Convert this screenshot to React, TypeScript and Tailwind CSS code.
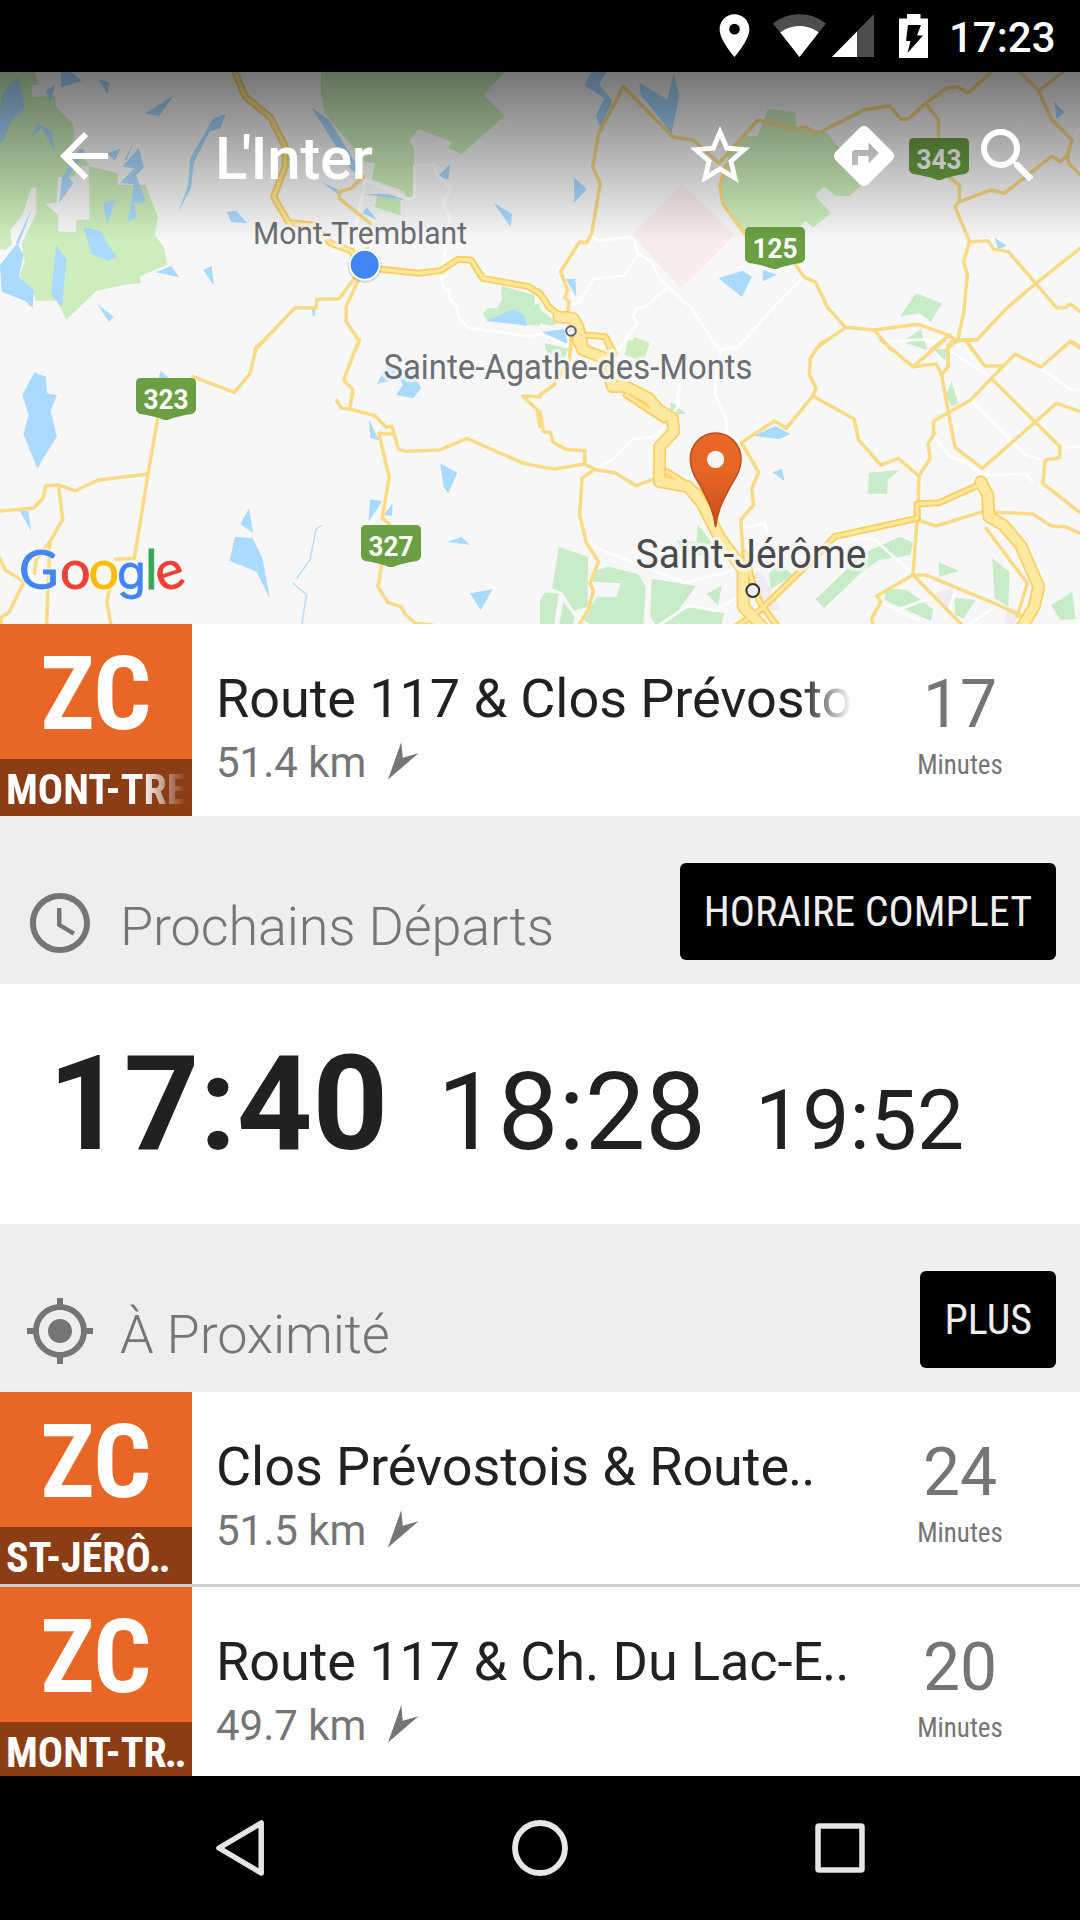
import React from "react";
import {
  MdAccessTime,
  MdArrowBack,
  MdDirections,
  MdLocationOn,
  MdMyLocation,
  MdSearch,
  MdStarBorder,
} from "react-icons/md";

type Sector = {
  transform: string;
  parks: string[];
  woods: string[];
  built: string[];
  holes: string[];
  water: string[];
  streams: string[];
  lanes: string[];
  roads: string[];
  highways: string[];
  motorways: string[];
};

/* The map is split in four sectors, each with its own local grid. */
const SECTORS: Sector[] = [
  {
    transform: "translate(0 -12) scale(.3444 .3333)",
    parks: [
      "0,36 100,36 113,76 90,76 94,110 160,108 163,140 213,193 213,290 240,290 258,318 342,340 342,374 422,374 458,470 450,525 475,560 486,614 408,648 408,670 362,674 280,693 192,780 165,722 105,722 95,690 57,650 72,605 62,552 105,460 105,380 90,385 65,465 30,510 35,555 15,570 0,568",
      "932,36 1465,36 1405,104 1465,168 1340,283 1303,265 1312,245 1215,207 1188,243 1203,268 1203,415 1175,412 1175,395 1080,358 1088,310 1060,305 943,160 932,100",
      "1097,400 1163,422 1163,467 1088,440",
    ],
    woods: ["1455,678 1552,705 1552,735 1568,730 1568,797 1415,783 1402,762 1415,745 1443,745 1457,718"],
    built: [],
    holes: ["168,352 213,350 240,318 258,318 260,478 222,480 220,517 168,514 170,466 132,432 165,428"],
    water: [
      "0,150 8,100 52,48 72,145 35,180 10,240 0,250",
      "177,36 205,36 237,62 178,82",
      "285,58 318,68 312,102",
      "160,72 134,92 147,127",
      "504,107 420,160 462,168",
      "655,163 618,175 600,210 552,295 546,375 518,455 555,383 562,310 608,215 640,205",
      "108,190 93,230 122,203 158,275 150,213",
      "904,142 955,180 1060,355 1020,330",
      "403,265 355,320 390,325 348,370 388,372 382,430 370,488 398,470 388,430 423,425 395,345 418,322",
      "390,240 362,300 368,300",
      "310,280 350,267 333,302",
      "230,268 247,270 200,350 213,370 172,428 180,355",
      "300,430 335,420 310,495",
      "243,502 290,512 338,590 316,604 265,582",
      "163,556 193,600 180,740 148,705",
      "50,550 68,585 55,650 98,690 95,745 72,722 5,695 0,615",
      "95,440 45,550 55,552",
      "452,637 497,618 520,652",
      "590,630 615,618 621,676",
      "282,732 330,770 317,786",
      "658,455 687,453 718,490 672,487",
      "935,367 980,388 990,410",
      "1065,442 1095,480 1052,460",
      "1055,402 1130,403 1175,420",
      "1307,312 1270,350 1302,358",
      "1433,428 1487,462 1482,500",
      "1493,747 1520,765 1532,797 1412,783",
      "906,747 915,747 914,770 908,768",
    ],
    streams: [],
    lanes: [
      "1060,360 1043,450 1020,570",
      "1060,360 1190,418 1203,410 1203,318 1260,312 1270,345 1310,385 1285,430 1305,470 1295,560 1280,640 1287,685 1305,690 1305,715 1330,745 1330,770 1358,803 1540,830 1568,822",
    ],
    roads: [
      "1055,350 1020,385 985,395 985,415 1075,490 1065,570",
      "1040,640 985,716 920,718 918,743 857,743 740,870",
      "1045,650 1005,740 1005,785 1043,843 1032,870",
    ],
    highways: [
      "680,30 712,110 785,172 828,260 828,320 795,410 838,488 912,495 960,550 1020,572 1055,622 1215,640 1280,632 1330,598 1368,600 1402,655 1535,680 1568,702",
    ],
    motorways: [],
  },
  {
    transform: "translate(540 -12) scale(.3444 .3333)",
    parks: [
      "662,147 740,157 745,200 832,215 870,265 935,375 898,408 860,408 825,380 798,405 845,460 793,503 770,483 700,560 590,520 530,425 525,375 550,280 600,228 632,228",
      "275,830 318,850 300,870 250,870",
    ],
    woods: [
      "1092,700 1167,730 1135,785 1102,760 1045,770",
      "1105,808 1125,870 1060,840",
      "0,747 50,790 35,797 0,790",
      "15,850 100,870 15,870",
    ],
    built: [],
    holes: [],
    water: [
      "150,36 192,36 172,75 210,122 175,205 163,165 187,115 128,75",
      "288,68 370,118 388,40 405,105 382,220 292,103",
      "98,352 136,387 100,428",
      "518,655 588,632 615,650 587,711",
      "647,629 688,644 647,664",
      "75,657 103,657 105,710",
      "7,815 70,808 80,850 30,840",
      "1320,533 1356,557 1330,567",
      "1493,125 1523,157 1500,178",
    ],
    streams: [],
    lanes: [
      "150,525 170,543 268,530 285,580 325,605 345,655 440,745 520,870",
      "285,580 245,647 155,657 112,730 85,730",
      "368,682 308,740 280,745 270,770 282,790 230,870",
      "767,650 680,740 572,865 520,865",
      "995,845 1115,838 1200,870",
      "1568,205 1545,235",
      "0,820 110,870",
    ],
    roads: [
      "80,760 85,725 72,712 80,690 60,635 115,545 135,548 150,520 175,370 153,320 170,222 242,80 385,230 445,240 520,310 632,180 735,207 772,202 802,222 940,150 1015,138 1047,177 1070,177 1120,130 1180,85 1212,80 1242,100 1310,36",
      "1120,130 1157,180 1157,240",
      "540,315 523,375 530,430 600,530",
      "740,610 765,650 800,667 835,742 887,802 970,810 1098,793 1185,825 1210,842 1270,838 1355,745 1440,670 1568,565",
      "887,802 815,855 800,870",
      "970,810 1020,870",
      "1185,350 1218,375 1218,425 1205,440 1247,545 1300,542 1318,568 1360,575 1500,743 1525,743 1540,732 1568,755",
      "1218,425 1310,390 1348,400 1487,288 1510,305 1532,285 1545,240 1485,178 1448,93 1395,36",
      "1448,93 1518,36",
      "1532,285 1535,310 1568,345",
      "1247,545 1230,605 1241,645 1230,760 1212,842",
      "1190,825 1135,870",
      "1240,842 1255,870",
      "1210,842 1180,870",
      "1510,870 1540,845 1568,865",
      "90,830 90,870",
    ],
    highways: ["0,700 25,740 60,770", "130,825 190,830 205,870"],
    motorways: ["55,771 95,774 110,800 125,870"],
  },
  {
    transform: "translate(0 268) scale(.3444 .3333)",
    parks: [],
    woods: [],
    built: [],
    holes: [],
    water: [
      "100,97 133,110 137,160 165,166 147,212 165,290 108,385 68,283 83,225 65,165",
      "467,92 490,114 460,114",
      "1120,80 1095,132 1160,115 1170,135 1150,165 1200,175 1222,145 1200,90",
      "1072,240 1100,300 1075,295",
      "1278,370 1328,398 1302,460 1288,440",
      "723,505 735,579 698,553",
      "682,590 733,594 762,655 784,777 745,695 667,662",
      "1074,478 1110,484 1070,545",
      "1140,488 1138,528 1115,525",
      "1298,606 1340,590 1364,614",
      "1365,760 1430,748 1396,811",
      "58,513 82,512 91,575",
    ],
    streams: ["932,558 918,567 900,660 862,715", "852,730 890,765 876,852"],
    lanes: [],
    roads: [
      "774,-4 745,20 725,103 680,157 560,110",
      "458,235 430,400 390,655 335,658",
      "430,402 285,420 218,453 170,435 133,437 125,475 97,505 0,513",
      "170,435 182,538 145,605 135,860",
      "0,655 15,690 70,725 25,818 5,830 0,860",
      "145,605 105,660 100,700",
      "320,740 310,785 323,860",
      "1043,-2 998,120 1025,150 1015,207 992,205 978,182",
      "1015,207 1088,227 1122,262 1138,258 1157,328 1180,334 1277,330 1355,295 1520,370 1568,380",
      "1145,282 1100,280 1130,412 1110,535 1130,552",
      "1108,675 1098,740 1125,787 1165,800 1178,825 1205,850 1255,855",
      "1568,170 1518,168 1560,210 1568,260",
    ],
    highways: [],
    motorways: [],
  },
  {
    transform: "translate(540 268) scale(.3444 .3333)",
    parks: ["255,0 318,12 305,50 285,60 247,45"],
    woods: [
      "55,620 140,652 138,800 98,812 65,757 35,745",
      "0,780 15,757 55,762 40,860 0,860",
      "68,785 100,830 95,860 55,860",
      "162,690 200,680 285,703 307,740 300,860 120,860 145,805 165,770 222,770 235,730 155,725",
      "325,716 453,738 395,820 440,800 535,820 525,860 340,860 320,830",
      "528,738 517,795 483,762",
      "458,553 500,610 480,645 430,650 395,600 455,605",
      "690,665 735,705 670,748 665,700",
      "800,778 940,640 1045,590 1083,608 1075,645 985,660 940,690 825,805",
      "955,398 1045,390 1010,420 1008,461 952,461",
      "1195,125 1215,190 1195,200 1178,165",
      "1157,667 1217,693 1160,710",
      "1313,655 1363,695 1360,800 1320,775",
      "1485,795 1545,755 1555,837 1510,840",
      "1005,745 1065,750 1142,808 1135,843 1000,780",
      "1205,773 1265,780 1230,835 1205,825",
      "380,185 425,222 378,222",
      "1060,8 1110,0 1125,30",
      "1140,25 1185,30 1175,60",
      "20,25 80,30 70,60 20,50",
    ],
    built: [
      "620,700 640,690 700,810 640,810",
      "1145,760 1200,745 1205,790 1175,810",
      "1355,800 1385,810 1380,860 1350,860",
    ],
    holes: [],
    water: ["683,258 727,282 695,298 620,287", "675,397 702,387 711,424"],
    streams: [],
    lanes: [
      "500,0 525,30 510,100 508,165 540,235 542,275 585,308",
      "525,30 570,22 590,0",
      "410,120 398,180 405,195 385,220 360,262 330,290 270,297 215,355 160,388",
      "135,612 420,728 560,692",
      "585,565 652,550 662,580",
      "860,597 970,597 1080,700",
      "115,838 150,860",
      "340,860 430,797 510,812 575,770",
      "1140,0 1310,112",
      "1250,180 1410,345 1465,360",
      "1145,290 1190,350 1235,365 1285,405 1412,403 1430,425",
      "1455,85 1540,148 1568,150",
      "1510,323 1568,320",
      "990,788 1100,840",
      "1050,805 1145,770",
      "1210,738 1187,815",
      "1330,795 1235,860",
      "1410,860 1450,810",
    ],
    roads: [
      "840,-5 815,10 785,55 782,105 802,145 792,168 715,265 680,243 585,308 635,397 615,445 620,495 583,540 590,650",
      "792,168 912,237 925,300 990,375 1040,355 1100,408 1098,490",
      "1100,408 1133,355 1127,310 1143,285 1143,243 1250,180 1310,115 1380,42 1455,82 1540,3 1568,20",
      "990,0 1083,80 1150,72 1165,100 1205,322 1285,385 1500,190 1568,215",
      "1205,0 1185,15 1185,80 1165,105",
      "1083,80 1175,0",
      "1235,0 1292,78 1340,78",
      "1205,0 1270,0",
      "1310,115 1510,320 1508,353 1467,360 1460,430 1568,518",
      "1098,540 1150,558 1285,515 1430,522 1485,558 1525,560 1568,580",
      "1095,540 1083,705 978,768 990,785 963,835 968,860",
      "1083,705 1120,705 1330,795 1395,825",
      "1083,705 1230,860",
      "1295,565 1415,730 1385,830",
      "0,215 10,275 30,278 38,307 75,328 130,332 130,372 42,387 0,380",
      "130,372 158,388 220,400 280,437 335,415",
      "158,388 122,415 115,525 135,610 170,665 145,730 155,752 140,810 110,860",
      "90,0 85,60 40,135 0,165",
    ],
    highways: [
      "1280,432 1160,488 1095,492 1095,535 855,590 830,620 640,810 570,860",
      "370,395 460,455 500,530",
      "250,165 360,240",
      "595,640 620,740 640,790 690,860",
      "195,0 215,40",
    ],
    motorways: [
      "110,0 125,30 190,55 210,140 250,140 315,175 345,210 385,235 388,275 347,320 347,425 430,440 470,490 520,590 590,690 590,800 645,860",
      "1280,425 1300,465 1303,530 1345,555 1395,615 1448,740 1435,800 1400,860",
    ],
  },
];

function Lines({ of, color, width }: { of: keyof Omit<Sector, "transform">; color: string; width: number }) {
  return (
    <>
      {SECTORS.map((s, i) => (
        <g key={i} transform={s.transform} fill="none" stroke={color} strokeWidth={width} strokeLinejoin="round" strokeLinecap="round">
          {s[of].map((p, j) => (
            <polyline key={j} points={p} />
          ))}
        </g>
      ))}
    </>
  );
}

function Areas({ of, color }: { of: keyof Omit<Sector, "transform">; color: string }) {
  return (
    <>
      {SECTORS.map((s, i) => (
        <g key={i} transform={s.transform} fill={color}>
          {s[of].map((p, j) => (
            <polygon key={j} points={p} />
          ))}
        </g>
      ))}
    </>
  );
}

function Shield({ x, y, label }: { x: number; y: number; label: string }) {
  return (
    <g transform={`translate(${x} ${y})`}>
      <path d="M5 0H55Q60 0 60 5V31Q60 34 56 36Q42 38 33 41.5Q30 42.5 27 41.5Q18 38 4 36Q0 34 0 31V5Q0 0 5 0Z" fill="#6a9f43" />
      <text x="30" y="30.500" textAnchor="middle" fontSize="27" fontWeight="700" fill="#fff" textLength="45" lengthAdjust="spacingAndGlyphs">
        {label}
      </text>
    </g>
  );
}

function Label({ x, y, w, size, color, children }: { x: number; y: number; w: number; size: number; color: string; children: string }) {
  return (
    <text
      x={x}
      y={y}
      fontSize={size}
      fill={color}
      textLength={w}
      lengthAdjust="spacingAndGlyphs"
      stroke="#f7f7f7"
      strokeOpacity=".75"
      strokeWidth="7"
      strokeLinejoin="round"
      paintOrder="stroke"
    >
      {children}
    </text>
  );
}

function GoogleLogo() {
  return (
    <g
      fontSize="54"
      className="font-[Lato] drop-shadow-[0_0_2px_#fff]"
      strokeWidth=".8"
    >
      <text x="19" y="517" fill="#4285f4" stroke="#4285f4">G</text>
      <text x="60" y="517" fill="#ea4335" stroke="#ea4335">o</text>
      <text x="88.500" y="517" fill="#fbbc05" stroke="#fbbc05">o</text>
      <text x="117" y="517" fontSize="47" className="font-[Inter]" fill="#4285f4" stroke="#4285f4">g</text>
      <text x="145" y="517" fill="#34a853" stroke="#34a853">l</text>
      <text x="156" y="517" fill="#ea4335" stroke="#ea4335" transform="rotate(-18 170 504)">e</text>
    </g>
  );
}

function MapCanvas() {
  return (
    <svg className="block h-[552px] w-[1080px]" viewBox="0 0 1080 552">
      <rect width="1080" height="552" fill="#f7f7f7" />
      <Areas of="parks" color="#cdeebc" />
      <Areas of="woods" color="#c8ebc8" />
      <Areas of="built" color="#efebf0" />
      <Areas of="holes" color="#f7f7f7" />
      <polygon points="681.9,111.3 734.6,163 681.2,216.3 632.3,163" fill="#f7ecec" />
      <Areas of="water" color="#aadaff" />
      <Lines of="streams" color="#b4dcfb" width={4} />
      <Lines of="lanes" color="#ffffff" width={8} />
      <Lines of="roads" color="#f9db86" width={10.5} />
      <Lines of="highways" color="#f8cf62" width={21} />
      <Lines of="motorways" color="#f8cf62" width={38} />
      <Lines of="highways" color="#fde79b" width={10} />
      <Lines of="motorways" color="#ffe89f" width={28} />

      <Shield x={136} y={306} label="323" />
      <Shield x={361} y={453} label="327" />
      <Shield x={745} y={155} label="125" />
      <Shield x={909} y={66} label="343" />

      <circle cx="571" cy="259" r="4.8" fill="#eee" stroke="#5f6368" strokeWidth="2" />
      <circle cx="752.8" cy="518.5" r="6.4" fill="#eee" stroke="#333" strokeWidth="2" />
      <Label x={253} y={171.5} w={214} size={32} color="#6b6e73">Mont-Tremblant</Label>
      <Label x={383.5} y={307} w={369} size={34.5} color="#6b6e73">Sainte-Agathe-des-Monts</Label>
      <Label x={635.5} y={495.5} w={231} size={40} color="#484a4d">Saint-Jérôme</Label>

      <circle cx="364.7" cy="194" r="17" fill="#000" opacity=".12" />
      <circle cx="364.7" cy="192.8" r="15.8" fill="#fff" />
      <circle cx="364.7" cy="192.8" r="14" fill="#4285f4" />

      <defs>
        <linearGradient id="pin" x1="0" y1="0" x2="0" y2="1">
          <stop offset=".4" stopColor="#e86626" />
          <stop offset="1" stopColor="#c54e1c" />
        </linearGradient>
      </defs>
      <path d="M715.6 455C714 440 709 430 701 415C695 405 690.3 398 690.3 387A25.3 26 0 0 1 741 387C741 398 736 405 730 415C722 430 717.2 440 715.6 455Z" fill="url(#pin)" stroke="#bd4f1c" strokeWidth="1.6" />
      <circle cx="715.6" cy="387.3" r="8.6" fill="#f7f7f7" />

      <GoogleLogo />
    </svg>
  );
}

function StatusBar() {
  return (
    <div className="flex h-[72px] items-start bg-black pl-[709px] text-white">
      <MdLocationOn className="mt-[10px] size-[51px]" />
      <svg className="mt-[14px] ml-[13px] h-[43px] w-[53px]" viewBox="0 0 53 43">
        <path d="M26.500 43L0 9.500C15-3 38-3 53 9.500Z" fill="#4d4d4d" />
        <path d="M26.500 43L7.300 18.500C18 9.800 35 9.800 45.700 18.500Z" fill="#fff" />
      </svg>
      <svg className="mt-[14px] ml-[6px] h-[43px] w-[42px]" viewBox="0 0 42 43">
        <path d="M42 0V43H0Z" fill="#4d4d4d" />
        <path d="M25 17.400V43H0Z" fill="#fff" />
      </svg>
      <svg className="mt-[14px] ml-[25px] h-[44px] w-[29px]" viewBox="0 0 29 44">
        <path d="M8 0H21.500V4.500H29V44H0V4.500H8Z" fill="#fff" />
        <path d="M9 11H22L18 21.500H24L8.500 39L11.500 27H7Z" fill="#000" />
      </svg>
      <div className="ml-[21px] text-[42px] leading-[75px] font-medium">17:23</div>
    </div>
  );
}

function Toolbar() {
  return (
    <div className="absolute inset-x-0 top-0 flex h-[168px] items-center bg-linear-to-b from-black/53 to-black/0 pr-9 pl-12 text-white">
      <MdArrowBack className="size-[72px]" />
      <h1 className="mt-[5px] ml-[95px] text-[60px] leading-[72px] font-medium">
        <span className="tracking-[-6px]">L</span>
        <span className="tracking-[-1px]">'</span>
        <span className="tracking-[-0.3px]">Inter</span>
      </h1>
      <div className="ml-auto flex gap-[72px]">
        <MdStarBorder className="size-[72px]" />
        <MdDirections className="size-[72px]" />
        <MdSearch className="size-[72px]" />
      </div>
    </div>
  );
}

type Stop = {
  heading: string;
  name: string;
  distance: string;
  minutes: string;
  /* Long texts fade out at the right edge instead of ending in two dots. */
  fade?: boolean;
};

function StopRow({ heading, name, distance, minutes, fade }: Stop) {
  return (
    <div className="flex h-[192px] shrink-0 bg-white">
      <div className="flex w-[192px] flex-col bg-[#e86626] font-bold font-stretch-condensed text-white">
        <div className="h-[135px] text-center text-[102px] leading-[140px]">ZC</div>
        <div className="h-[57px] bg-[#8b3d16] px-[6px]">
          <div
            className={
              "overflow-hidden text-[42px] leading-[61px] whitespace-nowrap" +
              (fade ? " [mask-image:linear-gradient(to_right,#000_75%,transparent)]" : "")
            }
          >
            {heading}
            {!fade && <span className="-ml-[2px] tracking-[-2.5px]">..</span>}
          </div>
        </div>
      </div>
      <div className="ml-6 w-[636px] pt-[43px]">
        <div
          className={
            "overflow-hidden text-[54px] leading-[64px] whitespace-nowrap text-[#212121]" +
            (fade ? " [mask-image:linear-gradient(to_right,#000_92%,transparent)]" : "")
          }
        >
          <span className="tracking-[-0.06px]">{name}</span>
          {!fade && <span className="-ml-[1px] tracking-[-1px]">..</span>}
        </div>
        <div className="flex text-[42px] leading-[64px] text-[#757575]">
          {distance}
          <svg className="mt-[11px] ml-[22px] h-[38px] w-[31px]" viewBox="0 0 31 38">
            <path d="M13.300 0L14.700 15.700L30.500 11.300L0 37.500Z" fill="#757575" />
          </svg>
        </div>
      </div>
      <div className="w-[216px] pt-12 text-center text-[#757575]">
        <div className="text-[66px] leading-[66px]">{minutes}</div>
        <div className="text-[27px] leading-[54px] font-stretch-condensed">Minutes</div>
      </div>
    </div>
  );
}

function SectionHeader({ icon, title, action }: { icon: React.ReactNode; title: string; action: string }) {
  return (
    <div className="flex h-[168px] items-start bg-[#eeeeee] px-6 text-[#757575]">
      <div className="mt-[71px]">{icon}</div>
      <h2 className="mt-[79px] ml-6 text-[54px] leading-[64px] font-light tracking-[-0.15px]">{title}</h2>
      <button className="mt-[47px] ml-auto h-[97px] rounded-[6px] bg-black px-6 text-[42px] leading-[97px] font-stretch-condensed text-[#eeeeee]">
        {action}
      </button>
    </div>
  );
}

function NavBar() {
  return (
    <div className="flex h-[144px] items-center justify-center gap-[228px] bg-black">
      <svg className="size-[72px]" viewBox="0 0 72 72" fill="none" stroke="#e6e6e6" strokeWidth="5.500" strokeLinejoin="round">
        <path d="M57.200 11V61L15 36Z" />
      </svg>
      <svg className="size-[72px]" viewBox="0 0 72 72" fill="none" stroke="#e6e6e6" strokeWidth="5.800">
        <circle cx="36" cy="36" r="25" />
      </svg>
      <svg className="size-[72px]" viewBox="0 0 72 72" fill="none" stroke="#e6e6e6" strokeWidth="5.500" strokeLinejoin="round">
        <rect x="14" y="14" width="44" height="44" rx="1" />
      </svg>
    </div>
  );
}

export default function App() {
  return (
    <div className="flex h-[1920px] w-[1080px] flex-col overflow-hidden bg-white font-[Roboto,sans-serif]">
      <StatusBar />
      <div className="relative">
        <MapCanvas />
        <Toolbar />
      </div>
      <StopRow heading="MONT-TREMBLANT" name="Route 117 & Clos Prévostois" distance="51.4 km" minutes="17" fade />
      <SectionHeader icon={<MdAccessTime className="size-[72px]" />} title="Prochains Départs" action="HORAIRE COMPLET" />
      <div className="flex h-[240px] items-baseline bg-white pl-12 text-[#212121]">
        <div className="text-[132px] leading-[240px] font-bold">17:40</div>
        <div className="ml-[49px] text-[108px]">18:28</div>
        <div className="ml-[49px] text-[84px]">19:52</div>
      </div>
      <SectionHeader icon={<MdMyLocation className="size-[72px]" />} title="À Proximité" action="PLUS" />
      <div className="flex h-[384px] flex-col overflow-hidden">
        <StopRow heading="ST-JÉRÔ" name="Clos Prévostois & Route" distance="51.5 km" minutes="24" />
        <div className="h-[3px] shrink-0 bg-[#d0d0d0]" />
        <StopRow heading="MONT-TR" name="Route 117 & Ch. Du Lac-E" distance="49.7 km" minutes="20" />
      </div>
      <NavBar />
    </div>
  );
}
